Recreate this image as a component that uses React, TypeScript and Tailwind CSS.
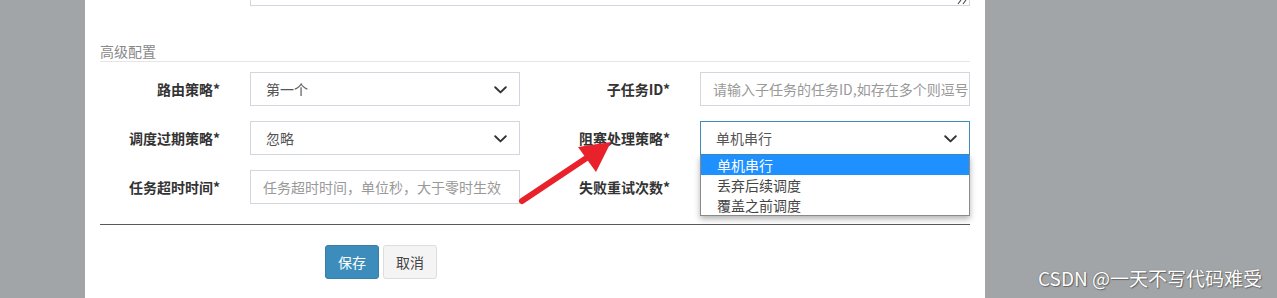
import React from "react";

const font = { fontFamily: '"Noto Sans CJK SC", "Noto Sans", "Liberation Sans", sans-serif' };

function Chevron() {
  return (
    <svg width="13" height="8" viewBox="0 0 13 8" className="absolute right-[12px] top-[13px]">
      <path d="M1.2 1.2 L6.5 6.4 L11.8 1.2" fill="none" stroke="#333" strokeWidth="1.9" strokeLinecap="round" strokeLinejoin="round" />
    </svg>
  );
}

function Label({ children }: { children: React.ReactNode }) {
  return (
    <div className="w-[150px] shrink-0 pr-[30px] text-right text-[14px] font-bold text-[#333] leading-[34px]">
      {children}
    </div>
  );
}

function Select({ value, focused }: { value: string; focused?: boolean }) {
  return (
    <div
      className={
        "relative h-[34px] w-[270px] shrink-0 border bg-white pl-[15px] text-[14px] leading-[32px] text-[#555] " +
        (focused ? "border-[#3c8dbc]" : "border-[#d2d6de]")
      }
    >
      {value}
      <Chevron />
    </div>
  );
}

function Input({ placeholder }: { placeholder: string }) {
  return (
    <div className="h-[34px] w-[270px] shrink-0 overflow-hidden whitespace-nowrap border border-[#d2d6de] bg-white pl-[12px] pr-[12px] text-[14px] leading-[32px] text-[#999]">
      {placeholder}
    </div>
  );
}

export default function App() {
  return (
    <div className="relative flex h-[298px] w-[1277px] overflow-hidden bg-[#a2a5a8]" style={font}>
      <div className="w-[85px] shrink-0" />
      <div className="relative w-[900px] shrink-0 bg-white px-[15px]">
        {/* textarea bottom */}
        <div className="flex">
          <div className="w-[150px] shrink-0" />
          <div className="relative h-[6px] w-[720px] border-x border-b border-[#d2d6de]">
            <svg width="10" height="5" viewBox="0 0 10 5" className="absolute right-[2px] top-0">
              <path d="M4 0 L1 4 M9 0 L6 4" stroke="#555" strokeWidth="1.2" />
            </svg>
          </div>
        </div>

        <div className="mt-[36px] border-b border-[#e5e5e5] text-[14px] leading-[19px] text-[#888]">高级配置</div>

        <div className="mt-[10px] flex flex-col gap-[15px]">
          <div className="flex h-[34px]">
            <Label>路由策略*</Label>
            <Select value="第一个" />
            <div className="w-[30px] shrink-0" />
            <Label>子任务ID*</Label>
            <Input placeholder="请输入子任务的任务ID,如存在多个则逗号分隔" />
          </div>
          <div className="flex h-[34px]">
            <Label>调度过期策略*</Label>
            <Select value="忽略" />
            <div className="w-[30px] shrink-0" />
            <Label>阻塞处理策略*</Label>
            <div className="relative z-10">
              <Select value="单机串行" focused />
              <div className="absolute left-0 top-[34px] w-[270px] border-x border-b border-[#8a8a8a] bg-white text-[14px] leading-[20px] text-[#444] shadow-[0_3px_6px_rgba(0,0,0,0.3)]">
                <div className="bg-[#1e90ff] pl-[16px] text-white">单机串行</div>
                <div className="pl-[16px]">丢弃后续调度</div>
                <div className="pl-[16px]">覆盖之前调度</div>
              </div>
            </div>
          </div>
          <div className="flex h-[34px]">
            <Label>任务超时时间*</Label>
            <Input placeholder="任务超时时间，单位秒，大于零时生效" />
            <div className="w-[30px] shrink-0" />
            <Label>失败重试次数*</Label>
            <div className="w-[270px]" />
          </div>
        </div>

        <div className="mt-[20px] border-t border-[#5a5a5a]" />

        <div className="mt-[20px] flex gap-[4px] pl-[225px]">
          <div className="h-[34px] w-[54px] rounded-[3px] border border-[#367fa9] bg-[#3c8dbc] text-center text-[14px] leading-[32px] text-white">
            保存
          </div>
          <div className="h-[34px] w-[54px] rounded-[3px] border border-[#ddd] bg-[#f4f4f4] text-center text-[14px] leading-[32px] text-[#444]">
            取消
          </div>
        </div>

        {/* annotation arrow */}
        <svg className="pointer-events-none absolute left-0 top-0 z-20" width="900" height="298" viewBox="0 0 900 298">
          <line x1="437" y1="201" x2="503" y2="157" stroke="#e8212b" strokeWidth="6" strokeLinecap="round" />
          <polygon points="526,142 493,147 511,172" fill="#e8212b" />
        </svg>
      </div>
      <div className="flex-1" />

      <div
        className="absolute bottom-[9px] right-[15px] text-[19px] leading-[22px] text-white"
        style={{ textShadow: "0 0 1px #555, 1px 1px 1px #666" }}
      >
        CSDN @一天不写代码难受
      </div>
    </div>
  );
}
